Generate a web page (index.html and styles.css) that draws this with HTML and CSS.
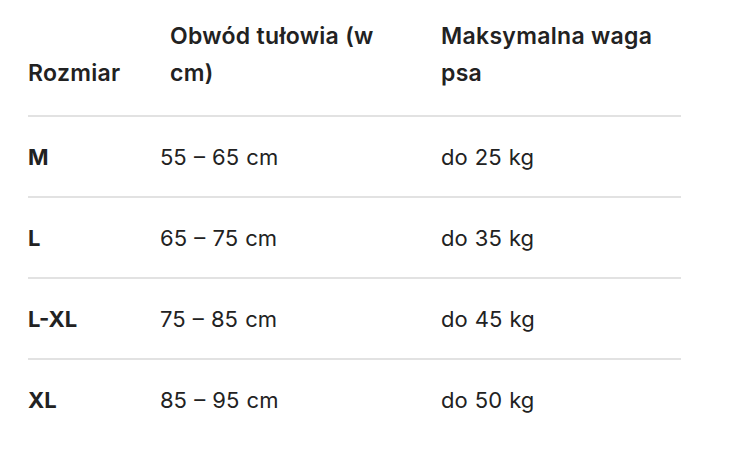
FILE: index.html
```html
<!DOCTYPE html>
<html lang="pl">
<head>
<meta charset="utf-8">
<link rel="stylesheet" href="styles.css">
</head>
<body>
<table class="sizes">
  <colgroup>
    <col class="c1"><col class="c2"><col class="c3">
  </colgroup>
  <thead>
    <tr>
      <th>Rozmiar</th>
      <th class="indent">Obwód tułowia (w cm)</th>
      <th>Maksymalna waga psa</th>
    </tr>
  </thead>
  <tbody>
    <tr><td class="size">M</td><td>55 – 65 cm</td><td>do 25 kg</td></tr>
    <tr><td class="size">L</td><td>65 – 75 cm</td><td>do 35 kg</td></tr>
    <tr><td class="size">L-XL</td><td>75 – 85 cm</td><td>do 45 kg</td></tr>
    <tr><td class="size">XL</td><td>85 – 95 cm</td><td>do 50 kg</td></tr>
  </tbody>
</table>
</body>
</html>
```
FILE: styles.css
```css
html, body {
  margin: 0;
  background: #fff;
}
body {
  padding: 0 0 0 28px;
  font-family: Inter, "Noto Sans", sans-serif;
  color: #222;
}
.sizes {
  border-collapse: collapse;
  width: 653px;
  table-layout: fixed;
}
.c1 { width: 132px; }
.c2 { width: 281px; }
.c3 { width: 240px; }
.sizes th {
  text-align: left;
  vertical-align: bottom;
  font-weight: 600;
  font-size: 23px;
  letter-spacing: 0.3px;
  line-height: 37px;
  padding: 18px 0 23px 0;
  border-bottom: 2px solid #e2e2e2;
}
.sizes th.indent {
  padding-left: 10px;
  padding-right: 40px;
}
.sizes th:last-child {
  padding-right: 20px;
}
.sizes td {
  font-size: 22px;
  font-weight: 400;
  word-spacing: 1px;
  line-height: 30px;
  padding: 25px 0 24px 0;
  border-bottom: 2px solid #e2e2e2;
}
.sizes tr:last-child td {
  border-bottom: none;
}
.sizes td.size {
  font-weight: 700;
}
```
